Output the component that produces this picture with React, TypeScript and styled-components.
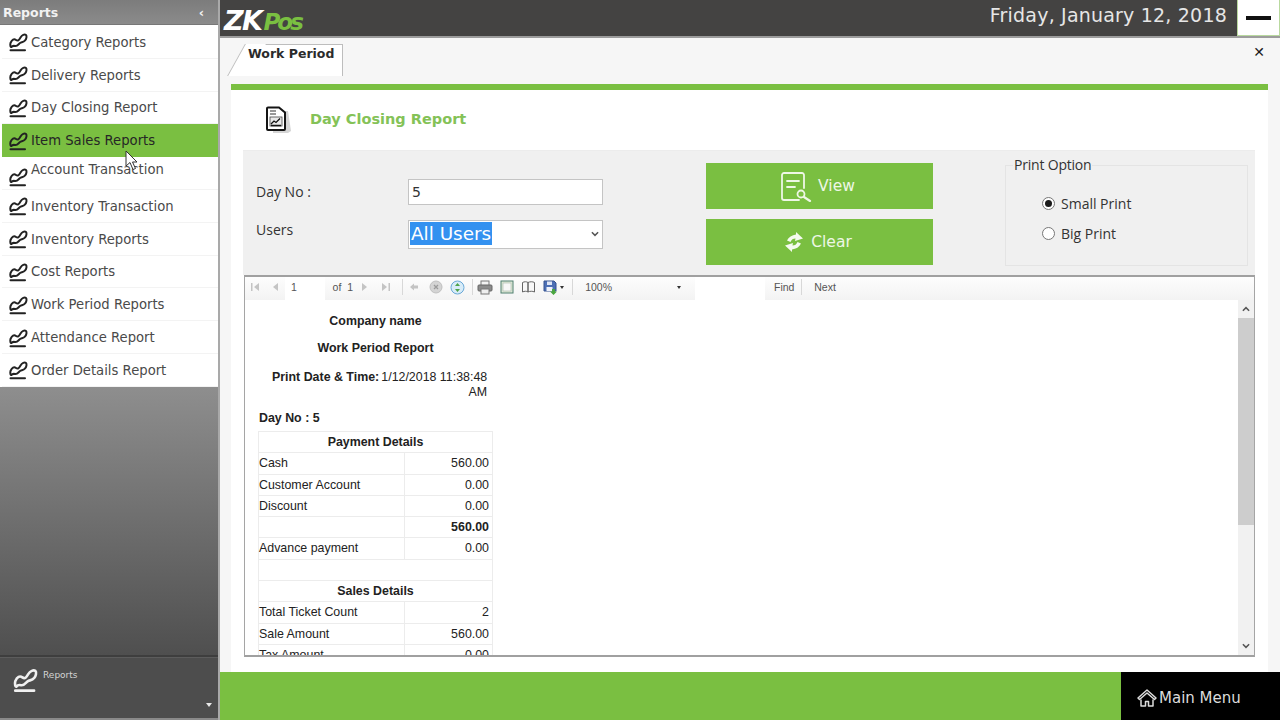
import React from "react";
import styled, { createGlobalStyle, css } from "styled-components";

const GlobalStyle = createGlobalStyle`
  html, body { margin: 0; padding: 0; width: 1280px; height: 720px; overflow: hidden; }
  body { font-family: "Open Sans", "Liberation Sans", sans-serif; background: #f5f5f5; }
  * { box-sizing: border-box; }
`;

const GREEN = "#7abf41";

const Page = styled.div`
  position: relative;
  display: grid;
  grid-template-columns: 220px 1fr;
  grid-template-rows: 720px;
  width: 1280px;
  height: 720px;
  overflow: hidden;
`;

/* sidebar */
const Sidebar = styled.aside`
  display: flex;
  flex-direction: column;
  min-height: 0;
  border-right: 2px solid #a9a9a9;
  background: #4d4d4d;
`;
const SideHeader = styled.div`
  display: flex;
  align-items: center;
  justify-content: space-between;
  flex: none;
  height: 25px;
  padding: 0 14px 0 3px;
  background: linear-gradient(#7c7c7c, #8b8b8b);
  border-bottom: 1px solid #777;
  color: #f2f2f2;
  font: bold 12.5px "DejaVu Sans", sans-serif;
`;
const Chevron = styled.span`
  font: bold 13px "DejaVu Sans", sans-serif;
  line-height: 1;
`;
const SideMenu = styled.div`
  flex: none;
  padding-top: 1px;
  background: #fff;
`;
const SideItem = styled.div<{ $active?: boolean; $raised?: boolean }>`
  display: flex;
  align-items: center;
  gap: 3px;
  height: 32.8px;
  padding: 1px 0 0 6px;
  margin: 0 0 0 2px;
  color: #4a4a4a;
  font: 13.2px "DejaVu Sans", sans-serif;
  border-bottom: 1px solid #f3f3f3;
  ${(p) => p.$active && css`
    background: ${GREEN};
    color: #262626;
    border-bottom-color: ${GREEN};
  `}
  ${(p) => p.$raised && css`
    align-items: flex-end;
    padding-bottom: 2px;
    span { margin-bottom: 10px; }
  `}
  svg { flex: none; }
`;
const SideFill = styled.div`
  flex: 1;
  background: linear-gradient(#8e8e8e, #4f4f4f);
  border-bottom: 2px solid #3e3e3e;
`;
const SideFooter = styled.div`
  position: relative;
  display: flex;
  align-items: flex-start;
  gap: 5px;
  flex: none;
  height: 63px;
  padding: 9px 0 0 12px;
  background: #4d4d4d;
  color: #d4d4d4;
  font: 9px "DejaVu Sans", sans-serif;
  border-top: 1px solid #5c5c5c;
  border-bottom: 2px solid #8a8a8a;
`;
const FooterLabel = styled.span`
  margin-top: 3px;
`;
const FooterCaret = styled.span`
  position: absolute;
  right: 6px;
  bottom: 11px;
  width: 0;
  height: 0;
  border: 3px solid transparent;
  border-top: 4px solid #e8e8e8;
  border-bottom: 0;
`;

/* main column */
const Main = styled.main`
  display: flex;
  flex-direction: column;
  min-width: 0;
  min-height: 0;
`;
const TopBar = styled.header`
  display: flex;
  align-items: stretch;
  justify-content: space-between;
  flex: none;
  height: 38px;
  background: #444342;
  border-bottom: 2px solid #9c9c9c;
`;
const Logo = styled.div`
  padding: 6px 0 0 4px;
  font: italic bold 27px/30px "DejaVu Sans", sans-serif;
  letter-spacing: -1.5px;
  color: #fff;
  em { color: ${GREEN}; font-style: italic; font-size: 23px; letter-spacing: -3px; margin-left: 2px; }
`;
const TopRight = styled.div`
  display: flex;
  align-items: stretch;
  gap: 10px;
`;
const DateText = styled.div`
  padding-top: 2px;
  color: #e6e6e6;
  font: 19px/26px "DejaVu Sans", sans-serif;
  letter-spacing: 0.2px;
`;
const MinButton = styled.div`
  display: flex;
  align-items: center;
  justify-content: center;
  width: 43px;
  background: #fff;
  border: 1px solid #b9d99f;
  border-top: 0;
  &::after {
    content: "";
    width: 25px;
    height: 4px;
    background: #111;
  }
`;
const Content = styled.div`
  flex: 1;
  display: flex;
  flex-direction: column;
  min-height: 0;
  padding: 0 12px 0 11px;
  background: #f6f6f6;
`;
const TabStrip = styled.div`
  display: flex;
  align-items: flex-start;
  justify-content: space-between;
  flex: none;
  height: 46px;
  padding: 6px 3px 0 17px;
`;
const Tab = styled.div`
  position: relative;
  width: 95px;
  height: 32px;
  padding: 0;
  background: #fff;
  border-top: 1px solid #bdbdbd;
  border-right: 1px solid #bdbdbd;
  color: #2b2b2b;
  font: bold 12.5px/17px "DejaVu Sans", sans-serif;
  white-space: nowrap;
  &::before {
    content: "";
    position: absolute;
    top: -1px;
    left: -12px;
    bottom: 0;
    width: 20px;
    background: #fff;
    border-left: 1px solid #bdbdbd;
    transform: skewX(-29deg);
    z-index: 0;
  }
  span { position: relative; z-index: 1; }
`;
const CloseIcon = styled.div`
  color: #1c1c1c;
  font: bold 14px/16px "DejaVu Sans", sans-serif;
`;
const Panel = styled.section`
  flex: 1;
  display: flex;
  flex-direction: column;
  min-height: 0;
  padding: 0 13px 15px 12px;
  background: #fff;
  border-top: 6px solid ${GREEN};
`;
const PanelHead = styled.div`
  display: flex;
  align-items: center;
  gap: 18px;
  flex: none;
  height: 60px;
  padding: 0 0 2px 22px;
  color: #84c257;
  font: bold 14.5px "DejaVu Sans", sans-serif;
`;
const FormArea = styled.div`
  display: flex;
  align-items: flex-start;
  height: 125px;
  flex: none;
  padding: 12px 7px 0 13px;
  background: #f0f0f0;
  border-top: 1px solid #ececec;
`;
const Fields = styled.div`
  display: grid;
  grid-template-columns: 152px 195px;
  grid-template-rows: 26px 29px;
  row-gap: 15px;
  width: 347px;
  margin-top: 16px;
  margin-right: 103px;
  color: #333;
  font-size: 14px;
`;
const FieldLabel = styled.label<{ $up?: boolean }>`
  line-height: 26px;
  margin-top: ${(p) => (p.$up ? "-3px" : "0")};
`;
const TextInput = styled.input`
  width: 195px;
  height: 26px;
  padding: 0 3px;
  border: 1px solid #c4c4c4;
  background: #fff;
  color: #333;
  font: 14px "DejaVu Sans", sans-serif;
  outline: none;
`;
const FakeSelect = styled.div`
  display: flex;
  align-items: center;
  justify-content: space-between;
  height: 29px;
  padding: 0 3px 2px 1px;
  background: #fff;
  border: 1px solid #c4c4c4;
  font: 18.4px "DejaVu Sans", sans-serif;
`;
const Selected = styled.span`
  padding: 0 1px;
  line-height: 23px;
  background: #3391f0;
  color: #fff;
`;
const Buttons = styled.div`
  display: flex;
  flex-direction: column;
  gap: 10px;
  width: 227px;
  margin-right: 72px;
`;
const GreenButton = styled.button`
  display: flex;
  align-items: center;
  justify-content: center;
  gap: 6px;
  height: 46px;
  padding: 0 4px 0 0;
  border: 0;
  background: ${GREEN};
  color: #eef7e6;
  font: 15.5px "DejaVu Sans", sans-serif;
`;
const Options = styled.fieldset`
  width: 243px;
  height: 103px;
  margin: 0;
  padding: 21px 0 0 36px;
  border: 1px solid #e4e4e4;
  color: #333;
  font-size: 14px;
`;
const OptionsTitle = styled.legend`
  margin-left: -29px;
  padding: 0 1px;
  letter-spacing: -0.2px;
  line-height: 4px;
`;
const RadioRow = styled.div`
  display: flex;
  align-items: center;
  gap: 6px;
  height: 30px;
`;
const RadioDot = styled.span<{ $on?: boolean }>`
  display: flex;
  align-items: center;
  justify-content: center;
  width: 13px;
  height: 13px;
  border: 1px solid #777;
  border-radius: 50%;
  background: #fff;
  &::after {
    content: "";
    width: 7px;
    height: 7px;
    border-radius: 50%;
    background: ${(p) => (p.$on ? "#1a1a1a" : "transparent")};
  }
`;

/* report viewer */
const Viewer = styled.div`
  flex: 1;
  display: flex;
  flex-direction: column;
  min-height: 0;
  margin-left: 1px;
  overflow: hidden;
  background: #fff;
  border: 1px solid #a5a5a5;
  border-top: 2px solid #a0a0a0;
  border-bottom: 2px solid #a0a0a0;
`;
const Toolbar = styled.div`
  display: flex;
  align-items: flex-start;
  flex: none;
  height: 23px;
  background: linear-gradient(#fdfdfd, #f3f3f3);
  color: #555;
  font: 10.5px "Liberation Sans", sans-serif;
`;
const Slot = styled.div<{ $w: number; $white?: boolean; $end?: boolean; $start?: boolean; $pad?: number }>`
  display: flex;
  align-items: center;
  justify-content: ${(p) => (p.$end ? "flex-end" : p.$start ? "flex-start" : "center")};
  flex: none;
  width: ${(p) => p.$w}px;
  height: 100%;
  padding: 0 ${(p) => (p.$end ? p.$pad ?? 0 : 0)}px 3px ${(p) => (p.$start ? p.$pad ?? 0 : 0)}px;
  background: ${(p) => (p.$white ? "#fff" : "transparent")};
`;
const ToolSep = styled.div`
  flex: none;
  width: 1px;
  height: 16px;
  margin-top: 2px;
  background: #d8d8d8;
`;
const ViewerBody = styled.div`
  flex: 1;
  display: flex;
  justify-content: space-between;
  min-height: 0;
  overflow: hidden;
`;
const Report = styled.div`
  width: 235px;
  margin-left: 13px;
  color: #222;
  font: 12.4px "Liberation Sans", sans-serif;
`;
const ReportTitle = styled.div<{ $mt: number }>`
  margin-top: ${(p) => p.$mt}px;
  text-align: center;
  font-weight: bold;
  line-height: 14px;
`;
const PrintDate = styled.div`
  display: flex;
  margin: 15px 0 0 14px;
  line-height: 15px;
  b { flex: none; }
  span { width: 108px; text-align: right; }
`;
const DayNo = styled.div`
  margin: 11px 0 0 1px;
  font-weight: bold;
  line-height: 14px;
`;
const Table = styled.div`
  margin-top: 6px;
  border-top: 1px solid #ececec;
  border-left: 1px solid #ececec;
  border-right: 1px solid #ececec;
`;
const Row = styled.div`
  display: grid;
  grid-template-columns: 145px 1fr;
  height: 21.3px;
  border-bottom: 1px solid #ececec;
  line-height: 20px;
`;
const Cell = styled.div<{ $num?: boolean; $bold?: boolean }>`
  padding: 0 3px 0 0;
  font-weight: ${(p) => (p.$bold ? "bold" : "normal")};
  ${(p) => p.$num && css`
    text-align: right;
    border-left: 1px solid #ececec;
  `}
`;
const HeadRow = styled.div`
  height: 21.3px;
  border-bottom: 1px solid #ececec;
  text-align: center;
  font-weight: bold;
  line-height: 20px;
`;
const ScrollBar = styled.div`
  display: flex;
  flex-direction: column;
  align-items: center;
  width: 16px;
  flex: none;
  background: #f1f1f1;
`;
const ScrollBtn = styled.div`
  flex: none;
  height: 18px;
  display: flex;
  align-items: center;
  justify-content: center;
`;
const ScrollThumb = styled.div`
  width: 100%;
  height: 207px;
  background: #cdcdcd;
`;
const ScrollRest = styled.div`
  flex: 1;
`;

const BottomBar = styled.footer`
  display: flex;
  justify-content: flex-end;
  height: 48px;
  flex: none;
  background: ${GREEN};
`;
const MainMenu = styled.div`
  display: flex;
  align-items: center;
  gap: 2px;
  width: 159px;
  padding: 3px 0 0 16px;
  background: #000;
  color: #dcdcdc;
  font: 15px "DejaVu Sans", sans-serif;
`;
const Cursor = styled.svg`
  position: absolute;
  left: 125px;
  top: 150px;
`;

const ChartIcon = ({ color = "#222", size = 20 }: { color?: string; size?: number }) => (
  <svg width={size} height={size} viewBox="0 0 20 20" fill="none" stroke={color} strokeWidth="2" strokeLinecap="round" strokeLinejoin="round">
    <path d="M2.500 11C4 7.500 6 6.500 8 8c2 1.500 3 0 4.500-2.500C14 3 16.500 2 18 3c1 1 .5 4-1 5.500-1.500 2-3.500 1.500-5 2.500-1.500 1-2.500 3.500-5 3-1.500-.3-2.500-.5-3.500 1C2.500 15.500 2 13 2.500 11z" />
    <path d="M2.500 18.200h14.500" />
  </svg>
);

const ReportIcon = () => (
  <svg width="27" height="28" viewBox="0 0 27 28" fill="none">
    <path d="M8 6h15l3 20-3 2H8z" fill="#d5d5d5" />
    <path d="M3 2.500h11l6 5V24a1 1 0 0 1-1 1H3a1 1 0 0 1-1-1V3.500a1 1 0 0 1 1-1z" fill="#fff" stroke="#151515" strokeWidth="2" />
    <path d="M5 6h6M5 9h6" stroke="#777" strokeWidth="1.500" />
    <rect x="5" y="12" width="12" height="9" fill="#e9e9e9" stroke="#444" strokeWidth=".8" />
    <path d="M6 19l3-3 2 1.500 4-4M6 20.500h10" stroke="#111" strokeWidth="1.300" />
  </svg>
);

const ViewIcon = () => (
  <svg width="32" height="31" viewBox="0 0 32 31" fill="none" stroke="#eef7e6" strokeWidth="1.800" strokeLinecap="round">
    <path d="M24 17V4a2 2 0 0 0-2-2H4a2 2 0 0 0-2 2v23a2 2 0 0 0 2 2h15" />
    <path d="M7 10h12M7 16h8" />
    <circle cx="21" cy="23" r="3.500" />
    <path d="M24 26l6 4" strokeWidth="2.200" />
  </svg>
);

const SwapArrow = "M13 1l7 6.500-8 2.500.5-2.500C10 7.500 8.500 8.500 7.500 11L4 9.500C5.500 6 9 4 13 3.500z";
const ClearIcon = () => (
  <svg width="22" height="22" viewBox="0 0 22 22" fill="#f5faf0">
    <path d={SwapArrow} />
    <path d={SwapArrow} transform="rotate(180 11 11)" />
  </svg>
);

const HomeIcon = () => (
  <svg width="20" height="20" viewBox="0 0 20 20" fill="none" stroke="#dcdcdc" strokeWidth="1.500" strokeLinejoin="round">
    <path d="M1 10l9-8 9 8-1.500 1.500L10 5l-7.500 6.500z" />
    <path d="M4 11.500V18h4.500v-4.500h3V18H16v-6.500" />
  </svg>
);

const SmallChevron = ({ up = false }: { up?: boolean }) => (
  <svg width="8" height="6" viewBox="0 0 9 6" fill="none" stroke="#555" strokeWidth="1.700">
    <path d={up ? "M1 5l3.500-3.500L8 5" : "M1 1l3.500 3.500L8 1"} />
  </svg>
);

const NavIcon = ({ kind }: { kind: "first" | "prev" | "next" | "last" | "back" }) => {
  const paths = {
    first: "M2 2v8h1.500V2zM10 2L5 6l5 4z",
    prev: "M9 2L4 6l5 4z",
    next: "M3 2l5 4-5 4z",
    last: "M2 2l5 4-5 4zM8.500 2v8H10V2z",
    back: "M6 2.500L2 6l4 3.500V7.500h4v-3H6z",
  };
  return (
    <svg width="12" height="12" viewBox="0 0 12 12" fill="#c4c4c4">
      <path d={paths[kind]} />
    </svg>
  );
};

const StopIcon = () => (
  <svg width="14" height="14" viewBox="0 0 14 14">
    <circle cx="7" cy="7" r="6" fill="#d4d4d4" stroke="#c0c0c0" />
    <path d="M5 5l4 4M9 5l-4 4" stroke="#9a9a9a" strokeWidth="1.300" />
  </svg>
);
const RefreshIcon = () => (
  <svg width="15" height="15" viewBox="0 0 15 15">
    <circle cx="7.500" cy="7.500" r="6.500" fill="#d8ecf8" stroke="#6aa9d8" />
    <path d="M7.500 3L10 6H5zM7.500 12L5 9h5z" fill="#4ea44a" />
  </svg>
);
const PrintIcon = () => (
  <svg width="16" height="15" viewBox="0 0 16 15">
    <rect x="4" y="1" width="8" height="5" fill="#f2f2f2" stroke="#777" />
    <rect x="1" y="5" width="14" height="6" rx="1" fill="#8b8b8b" stroke="#666" />
    <rect x="4" y="9" width="8" height="5" fill="#eee" stroke="#777" />
  </svg>
);
const LayoutIcon = () => (
  <svg width="14" height="14" viewBox="0 0 14 14">
    <rect x="1" y="1" width="12" height="12" fill="#dfe9d8" stroke="#4f7f6f" />
    <rect x="3" y="3" width="8" height="8" fill="#f7f7f7" stroke="#a8b8a8" strokeWidth=".6" />
  </svg>
);
const BookIcon = () => (
  <svg width="15" height="14" viewBox="0 0 15 14" fill="#f8f8f8" stroke="#666">
    <path d="M1.500 2.500c2-1 4-1 5.500 0V12c-1.500-1-3.500-1-5.500 0zM7 2.500c2-1 4.500-1 6.500 0V12c-2-1-4.500-1-6.500 0z" />
  </svg>
);
const SaveIcon = () => (
  <svg width="15" height="15" viewBox="0 0 15 15">
    <path d="M1 1h10l2 2v8H1z" fill="#4c6fb5" stroke="#34528f" />
    <rect x="4" y="1.500" width="5" height="3.500" fill="#dfe6f5" />
    <rect x="3.500" y="7" width="6" height="4" fill="#eef2fa" />
    <path d="M9 9h3v2.500h2L10.500 15 7 11.500h2z" fill="#4aa63f" />
  </svg>
);
const TinyCaret = styled.span`
  width: 0;
  height: 0;
  margin-left: 2px;
  border: 2.500px solid transparent;
  border-top: 3px solid #333;
  border-bottom: 0;
`;

const menu = [
  "Category Reports",
  "Delivery Reports",
  "Day Closing Report",
  "Item Sales Reports",
  "Account Transaction",
  "Inventory Transaction",
  "Inventory Reports",
  "Cost Reports",
  "Work Period Reports",
  "Attendance Report",
  "Order Details Report",
];

const rows: { label?: string; value?: string; bold?: boolean; head?: boolean }[] = [
  { label: "Payment Details", head: true },
  { label: "Cash", value: "560.00" },
  { label: "Customer Account", value: "0.00" },
  { label: "Discount", value: "0.00" },
  { label: "", value: "560.00", bold: true },
  { label: "Advance payment", value: "0.00" },
  { label: "", head: true },
  { label: "Sales Details", head: true },
  { label: "Total Ticket Count", value: "2" },
  { label: "Sale Amount", value: "560.00" },
  { label: "Tax Amount", value: "0.00" },
];

const App: React.FC = () => {
  return (
    <Page>
      <GlobalStyle />
      <Sidebar>
        <SideHeader>
          Reports
          <Chevron>‹</Chevron>
        </SideHeader>
        <SideMenu>
          {menu.map((item) => (
            <SideItem
              key={item}
              $active={item === "Item Sales Reports"}
              $raised={item === "Account Transaction"}
            >
              <ChartIcon />
              <span>{item}</span>
            </SideItem>
          ))}
        </SideMenu>
        <SideFill />
        <SideFooter>
          <ChartIcon color="#f0f0f0" size={26} />
          <FooterLabel>Reports</FooterLabel>
          <FooterCaret />
        </SideFooter>
      </Sidebar>
      <Main>
        <TopBar>
          <Logo>
            ZK<em>Pos</em>
          </Logo>
          <TopRight>
            <DateText>Friday, January 12, 2018</DateText>
            <MinButton />
          </TopRight>
        </TopBar>
        <Content>
          <TabStrip>
            <Tab>
              <span>Work Period</span>
            </Tab>
            <CloseIcon>✕</CloseIcon>
          </TabStrip>
          <Panel>
            <PanelHead>
              <ReportIcon />
              Day Closing Report
            </PanelHead>
            <FormArea>
              <Fields>
                <FieldLabel>Day No :</FieldLabel>
                <TextInput value="5" readOnly />
                <FieldLabel $up>Users</FieldLabel>
                <FakeSelect>
                  <Selected>All Users</Selected>
                  <SmallChevron />
                </FakeSelect>
              </Fields>
              <Buttons>
                <GreenButton>
                  <ViewIcon />
                  View
                </GreenButton>
                <GreenButton>
                  <ClearIcon />
                  Clear
                </GreenButton>
              </Buttons>
              <Options>
                <OptionsTitle>Print Option</OptionsTitle>
                <RadioRow>
                  <RadioDot $on />
                  Small Print
                </RadioRow>
                <RadioRow>
                  <RadioDot />
                  Big Print
                </RadioRow>
              </Options>
            </FormArea>
            <Viewer>
              <Toolbar>
                <Slot $w={19}><NavIcon kind="first" /></Slot>
                <Slot $w={21}><NavIcon kind="prev" /></Slot>
                <Slot $w={40} $white $start $pad={6}>1</Slot>
                <Slot $w={30} $end $pad={2}>of&nbsp;&nbsp;1</Slot>
                <Slot $w={20}><NavIcon kind="next" /></Slot>
                <Slot $w={22}><NavIcon kind="last" /></Slot>
                <Slot $w={5} />
                <ToolSep />
                <Slot $w={22}><NavIcon kind="back" /></Slot>
                <Slot $w={22}><StopIcon /></Slot>
                <Slot $w={21}><RefreshIcon /></Slot>
                <Slot $w={4} />
                <ToolSep />
                <Slot $w={24}><PrintIcon /></Slot>
                <Slot $w={20}><LayoutIcon /></Slot>
                <Slot $w={22}><BookIcon /></Slot>
                <Slot $w={28}><SaveIcon /><TinyCaret /></Slot>
                <Slot $w={5} />
                <ToolSep />
                <Slot $w={39} $end>100%</Slot>
                <Slot $w={69} $end><TinyCaret /></Slot>
                <Slot $w={14} />
                <Slot $w={70} $white />
                <Slot $w={36} $start $pad={9}>Find</Slot>
                <ToolSep />
                <Slot $w={46}>Next</Slot>
              </Toolbar>
              <ViewerBody>
                <Report>
                  <ReportTitle $mt={14}>Company name</ReportTitle>
                  <ReportTitle $mt={13}>Work Period Report</ReportTitle>
                  <PrintDate>
                    <b>Print Date &amp; Time:</b>
                    <span>1/12/2018 11:38:48 AM</span>
                  </PrintDate>
                  <DayNo>Day No : 5</DayNo>
                  <Table>
                    {rows.map((r, i) =>
                      r.head ? (
                        <HeadRow key={i}>{r.label}</HeadRow>
                      ) : (
                        <Row key={i}>
                          <Cell>{r.label}</Cell>
                          <Cell $num $bold={r.bold}>{r.value}</Cell>
                        </Row>
                      )
                    )}
                  </Table>
                </Report>
                <ScrollBar>
                  <ScrollBtn><SmallChevron up /></ScrollBtn>
                  <ScrollThumb />
                  <ScrollRest />
                  <ScrollBtn><SmallChevron /></ScrollBtn>
                </ScrollBar>
              </ViewerBody>
            </Viewer>
          </Panel>
        </Content>
        <BottomBar>
          <MainMenu>
            <HomeIcon />
            Main Menu
          </MainMenu>
        </BottomBar>
      </Main>
      <Cursor width="14" height="21" viewBox="0 0 14 21">
        <path d="M1 1v15l4-3.500 3 7 2.500-1-3-6.500H12z" fill="#fff" stroke="#333" strokeWidth="1" />
      </Cursor>
    </Page>
  );
};

export default App;
